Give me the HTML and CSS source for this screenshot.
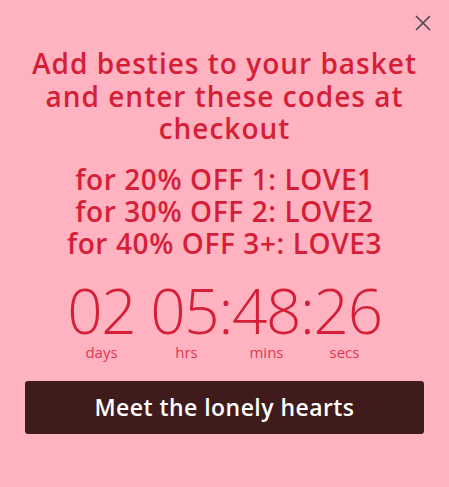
FILE: index.html
```html
<!DOCTYPE html>
<html lang="en">
<head>
<meta charset="utf-8">
<link rel="stylesheet" href="styles.css">
</head>
<body>
<div class="popup">
  <button class="close" aria-label="Close">
    <svg width="16" height="16" viewBox="0 0 16 16"><path d="M1 1L15 15M15 1L1 15" stroke="#4a4a4a" stroke-width="1.6" fill="none"/></svg>
  </button>
  <h1 class="title">Add besties to your basket and enter these codes at checkout</h1>
  <div class="codes">
    <p>for 20% OFF 1: LOVE1</p>
    <p>for 30% OFF 2: LOVE2</p>
    <p>for 40% OFF 3+: LOVE3</p>
  </div>
  <div class="timer">02 05:48:26</div>
  <div class="labels">
    <span>days</span><span>hrs</span><span>mins</span><span>secs</span>
  </div>
  <a class="cta" href="#">Meet the lonely hearts</a>
</div>
</body>
</html>
```
FILE: styles.css
```css
* { box-sizing: border-box; }
html, body { margin: 0; padding: 0; }
body {
  background: #ffb3c1;
  font-family: "Open Sans", Lato, sans-serif;
  width: 449px;
  height: 487px;
  overflow: hidden;
}
.popup {
  position: relative;
  padding: 47px 25px 0;
  display: flex;
  flex-direction: column;
  align-items: center;
  color: #d51f38;
}
.close {
  position: absolute;
  top: 15px;
  right: 18px;
  border: 0;
  background: none;
  padding: 0;
  width: 16px;
  height: 16px;
  display: block;
}
.close svg { display: block; }
.title {
  margin: 0;
  font-size: 28px;
  line-height: 32.5px;
  font-weight: 600;
  letter-spacing: 1px;
  text-align: center;
  width: 400px;
}
.codes {
  margin-top: 18px;
  text-align: center;
  font-size: 28px;
  line-height: 32px;
  font-weight: 600;
  letter-spacing: 0.6px;
}
.codes p { margin: 0; }
.timer {
  margin-top: 20px;
  font-size: 62px;
  line-height: 62px;
  font-weight: 300;
  letter-spacing: -1.3px;
}
.labels {
  display: grid;
  grid-template-columns: 80px 90px 70px 86px;
  justify-items: center;
  font-size: 15px;
  line-height: 18px;
  font-weight: 400;
  margin-top: 2px;
  color: #e0364f;
}
.cta {
  margin-top: 20px;
  align-self: stretch;
  height: 53px;
  display: flex;
  align-items: center;
  justify-content: center;
  background: #3f1b1c;
  color: #fff;
  border-radius: 3px;
  text-decoration: none;
  font-size: 23px;
  font-weight: 600;
  letter-spacing: 0.45px;
}
```
